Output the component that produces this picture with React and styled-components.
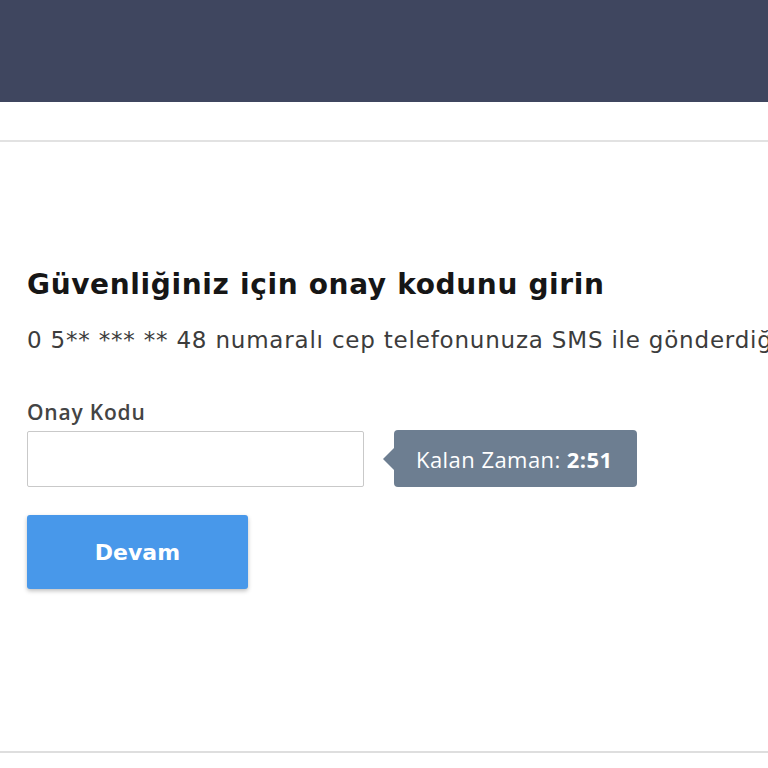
import React from "react";
import styled, { createGlobalStyle } from "styled-components";

const Global = createGlobalStyle`
  html, body { margin: 0; padding: 0; background: #fff; overflow: hidden; }
  body { font-family: "DejaVu Sans", "Noto Sans", Arial, sans-serif; }
  * { box-sizing: border-box; }
`;

const Header = styled.header`
  height: 102px;
  background: #3f465f;
`;

const SubBar = styled.div`
  height: 40px;
  border-bottom: 2px solid #e2e2e2;
`;

const Main = styled.main`
  height: 611px;
  padding: 125px 0 0 27px;
  border-bottom: 2px solid #dedede;
  white-space: nowrap;
  overflow: hidden;
`;

const Title = styled.h1`
  margin: 0;
  font-size: 28px;
  font-weight: 700;
  letter-spacing: 0.65px;
  color: #161616;
  line-height: 36px;
`;

const Subtitle = styled.p`
  margin: 22px 0 0;
  font-size: 23px;
  letter-spacing: 0.8px;
  color: #3c3c3c;
  line-height: 30px;
`;

const Label = styled.label`
  display: block;
  margin-top: 44px;
  font-family: "Open Sans", "Noto Sans", sans-serif;
  font-size: 21px;
  font-weight: 600;
  letter-spacing: 0.8px;
  color: #444;
  line-height: 26px;
`;

const Row = styled.div`
  margin-top: 5px;
  display: flex;
  align-items: center;
  gap: 30px;
`;

const Input = styled.input`
  width: 337px;
  height: 56px;
  border: 1px solid #c9c9c9;
  border-radius: 2px;
  font-size: 20px;
  padding: 0 12px;
  outline: none;
`;

const Tooltip = styled.div`
  position: relative;
  height: 57px;
  padding: 0 24px 0 22px;
  display: flex;
  align-items: center;
  background: #6d7e91;
  border-radius: 4px;
  color: #fff;
  font-family: "Open Sans", "Noto Sans", sans-serif;
  font-size: 22px;
  letter-spacing: 0.45px;
  &::before {
    content: "";
    position: absolute;
    left: -11px;
    top: 50%;
    margin-top: -11px;
    border-top: 11px solid transparent;
    border-bottom: 11px solid transparent;
    border-right: 11px solid #6d7e91;
  }
  b { font-weight: 700; margin-left: 6px; }
`;

const Button = styled.button`
  margin-top: 28px;
  width: 221px;
  height: 74px;
  border: none;
  border-radius: 3px;
  background: #4898ea;
  color: #fff;
  font-family: "DejaVu Sans", sans-serif;
  font-size: 22px;
  font-weight: 700;
  box-shadow: 0 2px 4px rgba(0,0,0,0.25);
`;

export default function App() {
  return (
    <>
      <Global />
      <Header />
      <SubBar />
      <Main>
        <Title>Güvenliğiniz için onay kodunu girin</Title>
        <Subtitle>0 5** *** ** 48 numaralı cep telefonunuza SMS ile gönderdiğimiz onay kodunu girin</Subtitle>
        <Label>Onay Kodu</Label>
        <Row>
          <Input />
          <Tooltip>Kalan Zaman:<b>2:51</b></Tooltip>
        </Row>
        <Button>Devam</Button>
      </Main>
    </>
  );
}
